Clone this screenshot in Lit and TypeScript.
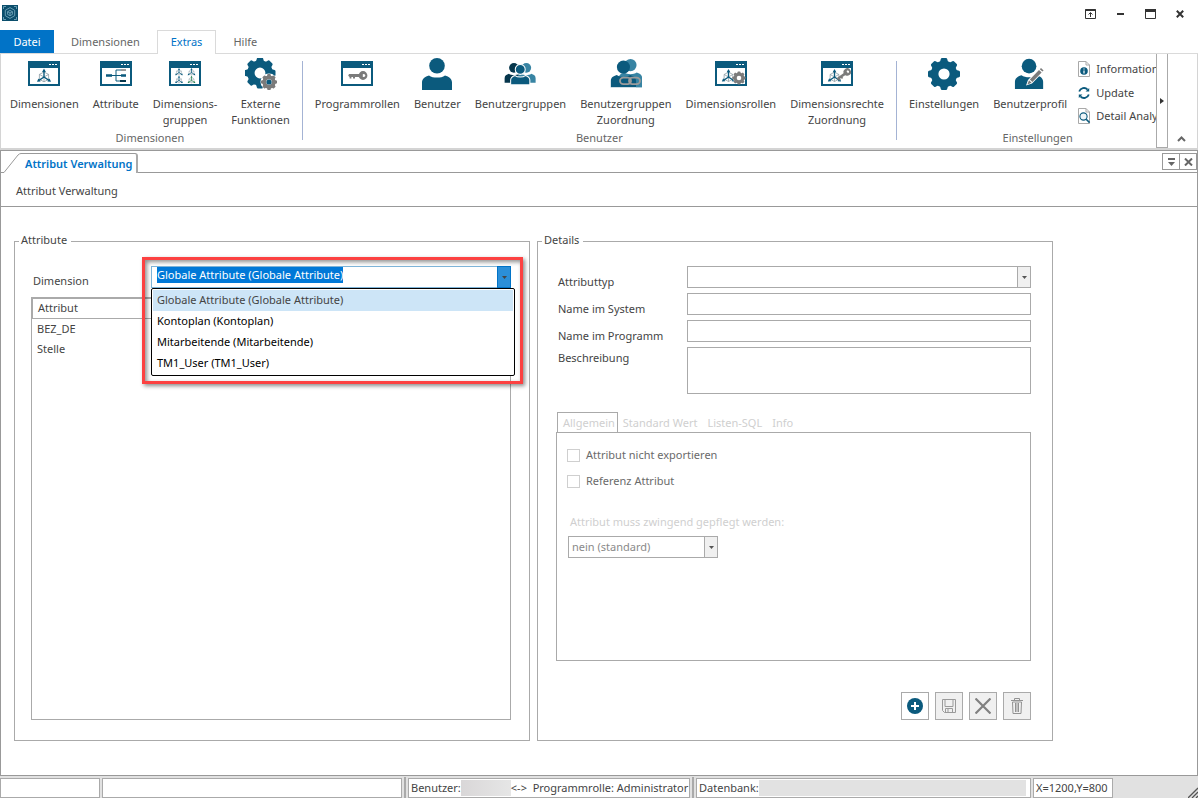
import { LitElement, html, svg, css, nothing, TemplateResult } from "lit";
import { customElement, property, query } from "lit/decorators.js";
import { classMap } from "lit/directives/class-map.js";

const TEAL = "#0b5a7d";
const TEAL_LIGHT = "#3884a3";
const TEAL_DARK = "#06364c";
const GREY = "#7b7b7b";

const cog = (cx: number, cy: number, r: number, color: string) => svg`
  <g transform="translate(${cx} ${cy}) scale(${r / 16})">
    <circle r="9.4" fill="none" stroke=${color} stroke-width="7.6"></circle>
    ${[0, 45, 90, 135, 180, 225, 270, 315].map(
      (a) => svg`<path d="M-4.2 -11.5 L-3.2 -15 Q-2.9 -16 -2 -16 H2 Q2.9 -16 3.2 -15 L4.2 -11.5Z" fill=${color} transform="rotate(${a})"></path>`
    )}
  </g>`;

const frame = (inner: unknown) => svg`
  <rect x="0" y="3" width="32" height="25" fill=${TEAL}></rect>
  <rect x="2" y="10" width="28" height="16" fill="#fff"></rect>
  <rect x="21" y="6" width="2" height="1" fill="#fff"></rect>
  <rect x="24" y="6" width="2" height="1" fill="#fff"></rect>
  <rect x="27" y="6" width="2" height="1" fill="#fff"></rect>
  ${inner}`;

const axes = (x: number, y: number, s: number, color = TEAL) => svg`
  <g transform="translate(${x} ${y}) scale(${s})" fill="none">
    <path d="M0 -4 L4.6 -1.6 V3.4 L0 5.8 L-4.6 3.4 V-1.6Z M-4.6 -1.6 L0 1 L4.6 -1.6 M0 1 V5.8" stroke="#8a9aa3" stroke-width=".8"></path>
    <path d="M0 1 V-5.5 M0 1 L-5 4.4 M0 1 L5 4.4" stroke=${color} stroke-width="1.4"></path>
    <path d="M0 -7.4 L-1.9 -4 H1.9Z M-7 5.8 L-5.6 2.4 L-3.4 5.6Z M7 5.8 L5.6 2.4 L3.4 5.6Z" fill=${color}></path>
  </g>`;

const key = (transform: string) => svg`
  <g transform=${transform}>
    <path d="M-10 -1.4 H2 V1.6 H-4 V3 H-6 V1.6 H-7.6 V3 H-9.4 V1.6 L-10.8 .2Z" fill=${GREY}></path>
    <circle cx="4" cy="0" r="3" fill="none" stroke=${GREY} stroke-width="2.8"></circle>
    <circle cx="5" cy="0" r="1.2" fill="#fff"></circle>
    <path d="M1.500 -2 h2.300 v4 h-2.300z" fill=${GREY}></path>
  </g>`;

const person = (x: number, y: number, s: number, color: string, line = 0) => svg`
  <g transform="translate(${x} ${y}) scale(${s})" fill=${color} stroke="#fff" stroke-width=${line}>
    <path d="M1 32 V24.5 C1 20.5 4 18.6 8 17.4 C10 19 13 19.6 16 19.6 C19 19.6 22 19 24 17.4 C28 18.6 31 20.5 31 24.5 V32Z"></path>
    <circle cx="16" cy="7.8" r="7.8"></circle>
  </g>`;

const sheet = svg`<path d="M2.5 .5 H10 L13.5 4 V15.5 H2.5Z" fill="#fff" stroke="#a9a9a9"></path><path d="M10 .5 V4 H13.5" fill="none" stroke="#a9a9a9"></path>`;

const ICONS: Record<string, unknown> = {
  dimension: frame(axes(16, 18, 1)),
  attribute: frame(svg`
    <path d="M6 17.5 H12 M21 17.5 H26" stroke=${TEAL} stroke-width="2.6"></path>
    <path d="M12 17.5 H16 M21 12 H16 V23 H21 M16 17.5 H22" stroke=${TEAL} stroke-width="1" fill="none"></path>
    <path d="M21 12 H26" stroke="#9a9a9a" stroke-width="2"></path>
    <path d="M20 23 H26" stroke=${TEAL_DARK} stroke-width="2"></path>`),
  dimgroups: frame(svg`${axes(10, 14, 0.55)}${axes(22.5, 14, 0.55)}${axes(10, 21.8, 0.55)}${axes(22.5, 21.8, 0.55, "#2e8555")}`),
  external: svg`${cog(15, 15, 15.5, TEAL)}<circle cx="24" cy="24" r="8.5" fill="#fff"></circle>${cog(24, 24, 8, GREY)}<circle cx="24" cy="24" r="2.6" fill=${TEAL}></circle>`,
  roles: frame(key("translate(18 17.5)")),
  user: person(0, 0, 1, TEAL),
  usergroup: svg`${person(0, 5, 0.62, TEAL_DARK, 0)}${person(12.4, 5, 0.62, TEAL_LIGHT, 0)}${person(6, 6.4, 0.64, TEAL, 1.6)}`,
  userlink: svg`${person(8, 1, 0.78, TEAL_LIGHT, 0)}${person(0, 2.5, 0.84, TEAL, 0)}
    <path d="M1 29.4 h30 v2.6 h-30z" fill="#fff"></path>
    <path d="M26 26 h6 v3.400 h-6z" fill=${TEAL_LIGHT}></path>
    <g fill="none" stroke="#9b9b9b" stroke-width="1.8">
      <rect x="10" y="19.600" width="11" height="6.6" rx="3.3"></rect>
      <rect x="19" y="19.600" width="11" height="6.6" rx="3.3"></rect>
    </g>`,
  dimroles: frame(svg`${axes(13.5, 18, 0.95)}<circle cx="24" cy="20" r="6" fill="#fff"></circle>${cog(24, 20, 6.6, GREY)}`),
  dimrights: frame(svg`${axes(13.5, 18, 0.95)}${key("translate(23.5 16) rotate(-35) scale(.85)")}`),
  settings: cog(16, 16, 16, TEAL),
  profile: svg`${person(0, 0.8, 0.94, TEAL)}
    <path d="M12 27.5 L14 22 L26 9.6 L30 13.2 L18 25.4Z" fill="#fff"></path>
    <path d="M13.4 26.4 L15 22.2 L17.6 24.7Z M15.8 21.4 L25 12 L27.6 14.4 L18.4 24Z M25.8 11.2 L27 10 L29.6 12.4 L28.4 13.6Z" fill=${GREY}></path>`,
  info: svg`${sheet}<circle cx="8" cy="10" r="3.8" fill=${TEAL}></circle><path d="M8 9.4 V12.4 M8 7.6 V8.6" stroke="#fff" stroke-width="1.2"></path>`,
  update: svg`<g fill="none" stroke=${TEAL} stroke-width="1.800"><path d="M3.2 6.600 A5 5 0 0 1 11.6 4.6"></path><path d="M12.8 9.400 A5 5 0 0 1 4.4 11.4"></path></g>
    <path d="M13.2 3 V6.6 H9.600Z M2.8 13 V9.4 H6.400Z" fill=${TEAL}></path>`,
  analyse: svg`${sheet}<circle cx="7.5" cy="8.5" r="3.6" fill="#eef5f8" stroke=${TEAL} stroke-width="1.1"></circle><path d="M10.2 11.2 L13.6 14.6" stroke=${TEAL} stroke-width="1.6"></path>`,
};

interface RibbonItem { icon: string; lines: string[]; }
interface RibbonGroup { title: string; items: RibbonItem[]; small?: { icon: string; text: string }[]; }

const GROUPS: RibbonGroup[] = [
  {
    title: "Dimensionen",
    items: [
      { icon: "dimension", lines: ["Dimensionen"] },
      { icon: "attribute", lines: ["Attribute"] },
      { icon: "dimgroups", lines: ["Dimensions-", "gruppen"] },
      { icon: "external", lines: ["Externe", "Funktionen"] },
    ],
  },
  {
    title: "Benutzer",
    items: [
      { icon: "roles", lines: ["Programmrollen"] },
      { icon: "user", lines: ["Benutzer"] },
      { icon: "usergroup", lines: ["Benutzergruppen"] },
      { icon: "userlink", lines: ["Benutzergruppen", "Zuordnung"] },
      { icon: "dimroles", lines: ["Dimensionsrollen"] },
      { icon: "dimrights", lines: ["Dimensionsrechte", "Zuordnung"] },
    ],
  },
  {
    title: "Einstellungen",
    items: [
      { icon: "settings", lines: ["Einstellungen"] },
      { icon: "profile", lines: ["Benutzerprofil"] },
    ],
    small: [
      { icon: "info", text: "Informationen" },
      { icon: "update", text: "Update" },
      { icon: "analyse", text: "Detail Analyse" },
    ],
  },
];

const base = css`
  * { box-sizing: border-box; }
  :host { font: 11px/16px "Noto Sans", "Open Sans", sans-serif; color: #444; }
  button, input, select, textarea { font: inherit; color: inherit; margin: 0; border-radius: 0; outline: none; }
  button { background: none; border: 0; padding: 0; }
  svg { display: block; flex: none; }
`;

@customElement("app-ribbon")
export class AppRibbon extends LitElement {
  static styles = [base, css`
    :host { display: block; }
    .titlebar { display: flex; align-items: center; justify-content: space-between; height: 30px; padding: 0 3px 0 2px; }
    .logo { margin-bottom: 4px; }
    .window { display: flex; }
    .window button { width: 30px; height: 28px; padding-bottom: 2px; display: grid; place-items: center; }
    .tabs { display: flex; gap: 3px; height: 24px; border-bottom: 1px solid #dadada; }
    .tab { height: 24px; padding: 0 13px 2px; border: 1px solid transparent; border-bottom: 0; color: #666; }
    .tab.file { width: 54px; height: 23px; padding-bottom: 0; border: 0; background: #0173c7; color: #fff; }
    .tab.active { background: #fff; border-color: #dadada; color: #0173c7; }
    .bar { display: flex; border: solid #d4d4d4; border-width: 0 1px 2px; }
    .scroll { flex: 1; min-width: 0; display: flex; overflow: hidden; }
    .group { flex: none; display: grid; grid-template-rows: 74px 18px 2px; padding: 0 5px 0 2px; position: relative; }
    .group + .group { padding-left: 6px; }
    .group + .group::before { content: ""; width: 1px; background: #a4b3d4; position: absolute; left: 0; top: 7px; bottom: 8px; }
    .items { display: flex; }
    .big { display: flex; flex-direction: column; align-items: center; gap: 6px; padding: 4px 7px 0; }
    .line { display: block; white-space: nowrap; }
    .smalls { display: flex; flex-direction: column; padding: 3px 2px 0; }
    .small { display: flex; align-items: center; gap: 4px; height: 24px; white-space: nowrap; }
    .title { text-align: center; color: #666; padding-top: 2px; }
    .more { flex: none; width: 12px; border: solid #aaa; border-width: 0 1px 1px; display: grid; place-items: center; }
    .fold { flex: none; width: 29px; display: flex; align-items: flex-end; justify-content: center; padding: 0 2px 6px 0; }
  `];

  render() {
    return html`
      <header class="titlebar">
        <svg class="logo" width="16" height="16" viewBox="0 0 16 16">
          <rect width="16" height="16" fill="#0b4e6c"></rect>
          <g fill="none" stroke="#7fb0c4">
            <path d="M1.5 4 V1.5 H4 M12 1.5 H14.5 V4 M14.5 12 V14.5 H12 M4 14.5 H1.5 V12" stroke-width=".8"></path>
            <path d="M8 2.6 L12.7 5.3 V10.7 L8 13.4 L3.3 10.7 V5.3Z" stroke-width=".8"></path>
            <path d="M8 5.4 L10.4 6.7 V9.4 L8 10.7 L5.6 9.4 V6.7Z M5.6 6.7 L8 8 L10.4 6.7 M8 8 V10.7" stroke-width=".8"></path>
          </g>
        </svg>
        <div class="window">
          <button aria-label="Menüband-Anzeigeoptionen"><svg width="11" height="10" viewBox="0 0 11 10" fill="none" stroke="#333"><path d="M.5 1 H10.5" stroke-width="2"></path><path d="M.5 .5 H10.5 V9.5 H.5Z M5.5 8 V4 M3.5 5.5 L5.5 3.5 L7.5 5.5"></path></svg></button>
          <button aria-label="Minimieren"><svg width="7" height="10" viewBox="0 0 7 10"><path d="M0 4 h7 v2 h-7z" fill="#333"></path></svg></button>
          <button aria-label="Maximieren"><svg width="11" height="10" viewBox="0 0 11 10"><path d="M.5 .5 H10.5 V9.5 H.5Z" fill="none" stroke="#333"></path><path d="M0 0 h11 v3 h-11z" fill="#333"></path></svg></button>
          <button aria-label="Schließen"><svg width="8" height="8" viewBox="0 0 8 8"><path d="M.8 .8 L7.2 7.2 M7.2 .8 L.8 7.2" stroke="#333" stroke-width="2"></path></svg></button>
        </div>
      </header>
      <nav class="tabs">
        ${["Datei", "Dimensionen", "Extras", "Hilfe"].map((t) => html`
          <button class=${classMap({ tab: true, file: t === "Datei", active: t === "Extras" })}>${t}</button>`)}
      </nav>
      <div class="bar">
        <div class="scroll">${GROUPS.map((g) => this.group(g))}</div>
        <button class="more" aria-label="Weiter"><svg width="4" height="6" viewBox="0 0 4 6"><path d="M0 0 L4 3 L0 6Z" fill="#333"></path></svg></button>
        <button class="fold" aria-label="Menüband reduzieren"><svg width="9" height="6" viewBox="0 0 9 6"><path d="M1 5 L4.500 1.500 L8 5" fill="none" stroke="#666" stroke-width="2"></path></svg></button>
      </div>`;
  }

  private group(g: RibbonGroup): TemplateResult {
    return html`
      <section class="group">
        <div class="items">
          ${g.items.map((i) => html`
            <button class="big">
              <svg width="32" height="32" viewBox="0 0 32 32">${ICONS[i.icon]}</svg>
              <span>${i.lines.map((l) => html`<span class="line">${l}</span>`)}</span>
            </button>`)}
          ${g.small ? html`<div class="smalls">${g.small.map((s) => html`
            <button class="small"><svg width="16" height="16" viewBox="0 0 16 16">${ICONS[s.icon]}</svg>${s.text}</button>`)}</div>` : nothing}
        </div>
        <div class="title">${g.title}</div>
      </section>`;
  }
}

@customElement("select-box")
export class SelectBox extends LitElement {
  static formAssociated = true;
  static shadowRootOptions = { ...LitElement.shadowRootOptions, delegatesFocus: true };

  @property() label = "";
  @property() value = "";
  @property({ type: Boolean }) disabled = false;

  static styles = [base, css`
    :host { display: block; position: relative; height: 22px; }
    select { appearance: none; width: 100%; height: 100%; border: 1px solid #aaa; background: #fff; padding: 0 16px 0 3px; opacity: 1; color: #8a8a8a; }
    .arrow { position: absolute; top: 0; right: 0; bottom: 0; width: 14px; border: 1px solid #aaa; background: #f0f0f0; display: grid; place-items: center; pointer-events: none; }
  `];

  render() {
    return html`
      <select aria-label=${this.label} ?disabled=${this.disabled}><option>${this.value}</option></select>
      <span class="arrow"><svg width="5" height="3" viewBox="0 0 5 3"><path d="M0 0 H5 L2.500 3Z" fill="#555"></path></svg></span>`;
  }
}

@customElement("dimension-combo")
export class DimensionCombo extends LitElement {
  static formAssociated = true;
  static shadowRootOptions = { ...LitElement.shadowRootOptions, delegatesFocus: true };

  @property({ attribute: false }) options: string[] = [];
  @query("input") private field!: HTMLInputElement;

  static styles = [base, css`
    :host { display: block; position: relative; height: 22px; }
    .box { display: flex; height: 100%; border: 1px solid #7eb4d8; background: #fff; }
    input { flex: 1; min-width: 0; height: 16px; border: 0; padding: 0 5px; background: none; }
    input::selection { background: #0078d7; color: #fff; }
    .drop { width: 14px; margin: -1px; background: #2b8fd8; border: 1px solid #0173c7; display: grid; place-items: center; }
    .list { position: absolute; z-index: 2; top: 100%; left: 0; right: -4px; margin: 0; padding: 1px; list-style: none; background: #fff; border: 1px solid #000; border-radius: 2px; color: #000; }
    .option { height: 21px; line-height: 19px; padding: 0 4px; }
    .option.current { background: #cde5f7; color: #444; }
    .callout { position: absolute; z-index: 1; inset: -9px -12px -96px -9px; border: 3px solid #fc4141; box-shadow: 2px 2px 4px rgba(0, 0, 0, .45), inset 2px 2px 4px rgba(0, 0, 0, .45); pointer-events: none; }
  `];

  firstUpdated() {
    this.field.focus();
    this.field.select();
  }

  render() {
    return html`
      <div class="box">
        <input role="combobox" aria-label="Dimension" aria-expanded="true" aria-controls="dims" .value=${this.options[0]}>
        <button class="drop" aria-label="Liste öffnen"><svg width="5" height="3" viewBox="0 0 5 3"><path d="M0 0 H5 L2.500 3Z" fill="#444"></path></svg></button>
      </div>
      <ul class="list" id="dims" role="listbox">
        ${this.options.map((o, i) => html`<li role="option" class=${classMap({ option: true, current: i === 0 })}>${o}</li>`)}
      </ul>
      <div class="callout"></div>`;
  }
}

@customElement("app-root")
export class AppRoot extends LitElement {
  static styles = [base, css`
    :host { display: flex; flex-direction: column; min-height: 100vh; background: #fff; }
    .work { flex: 1; display: flex; flex-direction: column; border: 1px solid #999; }
    .strip { display: flex; align-items: flex-end; height: 22px; }
    .edge { width: 3px; height: 1px; background: #999; }
    .doc { height: 20px; padding: 0 4px; border: 1px solid #999; border-width: 1px 2px 0 0; border-right-color: #aaa; border-top-right-radius: 3px; color: #0173c7; font-weight: 600; white-space: nowrap; }
    .rest { flex: 1; align-self: stretch; display: flex; justify-content: flex-end; align-items: center; border-bottom: 1px solid #999; }
    .rest button { width: 18px; height: 17px; margin-left: -1px; border: 1px solid #999; display: grid; place-items: center; }
    .crumb { height: 34px; padding: 10px 15px 0; border-bottom: 1px solid #999; }
    .main { flex: 1; display: grid; grid-template-columns: repeat(2, minmax(0, 516px)); gap: 7px; padding: 25px 13px 34px; }
    fieldset { display: flex; flex-direction: column; min-width: 0; margin: 0; padding: 0; border: 1px solid #aaa; }
    legend { margin-left: 4px; padding: 0 4px 2px 2px; }
    .left, .right { flex: 1; display: flex; flex-direction: column; }
    .left { padding: 16px 18px 20px 16px; gap: 9px; }
    .right { padding: 16px 21px 20px 18px; }
    .fields { display: grid; grid-template-columns: 131px minmax(0, 1fr); row-gap: 5px; }
    .left .fields { grid-template-columns: 120px minmax(0, 1fr); }
    .fields label { padding: 8px 0 0 2px; height: 22px; }
    .left .fields label { padding-top: 7px; }
    .fields label.top { padding-top: 3px; }
    .fields input, .fields textarea { width: 100%; height: 22px; border: 1px solid #aaa; background: #fff; padding: 0 4px; }
    .fields textarea { display: block; height: 47px; resize: none; }
    .grid { flex: 1; border: 1px solid #aaa; }
    table { width: 100%; border-spacing: 0; }
    th { height: 21px; padding: 0 5px 2px; text-align: left; font-weight: 400; border: solid #aaa; border-width: 1px 0 1px 1px; }
    td { height: 20px; padding: 0 5px; }
    .tabs { display: flex; margin: 18px 0 -1px 1px; color: #cfcfcf; }
    .tabs button { height: 21px; padding: 0 5px; color: #cfcfcf; }
    .tabs button.on { border: 1px solid #aaa; border-bottom: 0; background: #fff; padding: 0 2px 0 5px; }
    .panel { flex: 1; border: 1px solid #aaa; padding: 12px 10px; display: flex; flex-direction: column; align-items: flex-start; gap: 6px; }
    .check { display: flex; align-items: center; gap: 6px; height: 20px; color: #6a6a6a; }
    .check input { appearance: none; width: 13px; height: 13px; border: 1px solid #cfcfcf; background: #fff; }
    .must { padding: 17px 0 0 3px; color: #cfcfcf; }
    .panel select-box { width: 150px; margin-left: 1px; }
    .actions { display: flex; justify-content: flex-end; gap: 6px; padding-top: 31px; }
    .actions button { width: 28px; height: 28px; display: grid; place-items: center; border: 1px solid #aaa; background: #f0f0f0; }
    .actions button.live { background: #fff; }
    .status { display: flex; gap: 2px; height: 22px; padding-top: 2px; background: #e1e1e1; }
    .cell { display: flex; align-items: center; overflow: hidden; border: 1px solid #aaa; background: #fff; padding: 0 2px; white-space: pre; }
    .cell.c100 { width: 100px; }
    .cell.c300 { width: 300px; }
    .cell.user { width: 282px; padding-right: 0; }
    .cell.c80 { width: 80px; }
    .cell.wide { flex: 1; }
    .bar { width: 2px; background: #aaa; margin-top: -1px; }
    .blob { flex: none; width: 50px; height: 16px; background: linear-gradient(90deg, #d9d7d8, #e6e6e6); }
    .wide .blob { flex: 1; margin: 0 2px 0 0; background: #e2e2e2; }
    .grip { width: 83px; display: flex; justify-content: flex-end; align-items: flex-end; }
  `];

  private dims = ["Globale Attribute (Globale Attribute)", "Kontoplan (Kontoplan)", "Mitarbeitende (Mitarbeitende)", "TM1_User (TM1_User)"];

  render() {
    return html`
      <app-ribbon></app-ribbon>
      <div class="work">
        <div class="strip">
          <span class="edge"></span>
          <svg width="17" height="20" viewBox="0 0 17 20" fill="none" stroke="#999"><path d="M0 19.500 L14 2 Q15.500 .5 17 .5"></path></svg>
          <button class="doc">Attribut Verwaltung</button>
          <div class="rest">
            <button aria-label="Fensterliste"><svg width="7" height="8" viewBox="0 0 7 8"><path d="M0 0 H7 V2 H0Z M0 4 H7 L3.500 8Z" fill="#666"></path></svg></button>
            <button aria-label="Schließen"><svg width="9" height="8" viewBox="0 0 9 8"><path d="M1 .5 L8 7.500 M8 .5 L1 7.500" stroke="#666" stroke-width="2"></path></svg></button>
          </div>
        </div>
        <div class="crumb">Attribut Verwaltung</div>
        <main class="main">
          <fieldset>
            <legend>Attribute</legend>
            <div class="left">
              <div class="fields">
                <label for="dim">Dimension</label>
                <dimension-combo id="dim" .options=${this.dims}></dimension-combo>
              </div>
              <div class="grid">
                <table>
                  <thead><tr><th>Attribut</th></tr></thead>
                  <tbody><tr><td>BEZ_DE</td></tr><tr><td>Stelle</td></tr></tbody>
                </table>
              </div>
            </div>
          </fieldset>
          <fieldset>
            <legend>Details</legend>
            <div class="right">
              <div class="fields">
                <label for="type">Attributtyp</label><select-box id="type" label="Attributtyp"></select-box>
                <label for="sys">Name im System</label><input id="sys">
                <label for="prog">Name im Programm</label><input id="prog">
                <label class="top" for="desc">Beschreibung</label><textarea id="desc"></textarea>
              </div>
              <div class="tabs">
                <button class="on">Allgemein</button><button>Standard Wert</button><button>Listen-SQL</button><button>Info</button>
              </div>
              <div class="panel">
                <label class="check"><input type="checkbox" disabled>Attribut nicht exportieren</label>
                <label class="check"><input type="checkbox" disabled>Referenz Attribut</label>
                <label class="must" for="must">Attribut muss zwingend gepflegt werden:</label>
                <select-box id="must" label="Attribut muss zwingend gepflegt werden" value="nein (standard)" disabled></select-box>
              </div>
              <div class="actions">
                <button class="live" aria-label="Neu"><svg width="16" height="16" viewBox="0 0 16 16"><circle cx="8" cy="8" r="8" fill=${TEAL}></circle><path d="M8 4 V12 M4 8 H12" stroke="#fff" stroke-width="2"></path></svg></button>
                <button disabled aria-label="Speichern"><svg width="16" height="16" viewBox="0 0 16 16" fill="none" stroke="#9a9a9a"><path d="M1.500 1.500 H14.500 V14.500 H3.500 L1.500 12.500Z M4 1.500 V8.500 H12 V1.500 M4.500 14.500 V10.500 H11.500 V14.500 M7 11 V14"></path></svg></button>
                <button disabled aria-label="Abbrechen"><svg width="16" height="16" viewBox="0 0 16 16"><path d="M.5 .5 L15.500 15.500 M15.500 .5 L.5 15.500" stroke="#808080" stroke-width="2.200"></path></svg></button>
                <button disabled aria-label="Löschen"><svg width="12" height="16" viewBox="0 0 12 16" fill="none" stroke="#929292"><path d="M0 2.500 H12 M3.500 2 V.5 H8.500 V2 M1.500 4 L2 15.500 H10 L10.500 4Z M4.500 5 V14 M6 5 V14 M7.500 5 V14"></path></svg></button>
              </div>
            </div>
          </fieldset>
        </main>
      </div>
      <footer class="status">
        <span class="cell c100"></span>
        <span class="cell c300"></span>
        <span class="bar"></span>
        <span class="cell user">Benutzer:<span class="blob"></span>&lt;-&gt;  Programmrolle: Administrator</span>
        <span class="bar"></span>
        <span class="cell wide">Datenbank:<span class="blob"></span></span>
        <span class="cell c80">X=1200,Y=800</span>
        <span class="grip"><svg width="10" height="11" viewBox="0 0 10 11"><path d="M0 11 L10 1 M4 11 L10 5 M8 11 L10 9" stroke="#555" stroke-width="1.300"></path></svg></span>
      </footer>`;
  }
}
